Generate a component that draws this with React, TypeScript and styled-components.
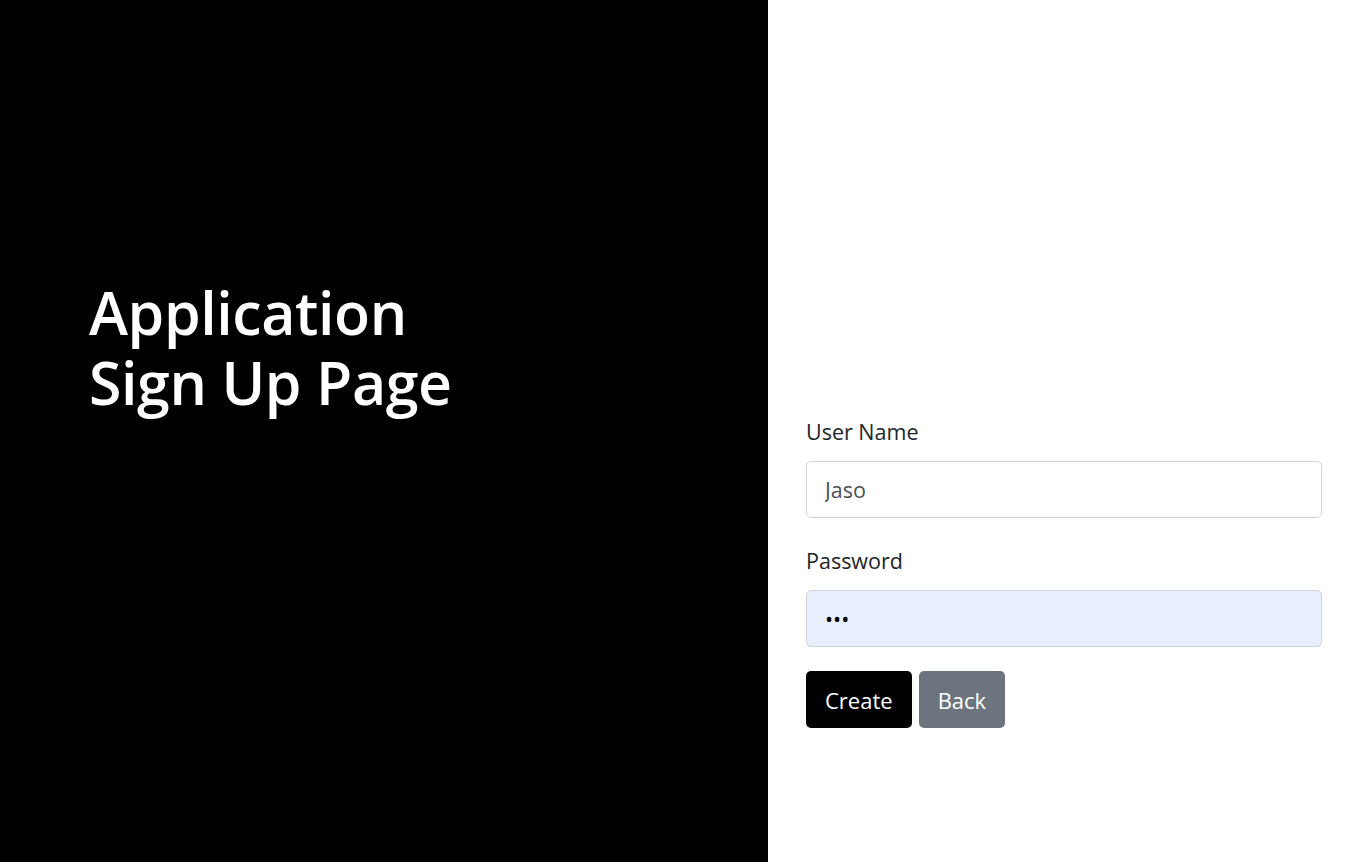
import React from "react";
import styled, { createGlobalStyle } from "styled-components";

const Global = createGlobalStyle`
  html, body { margin: 0; padding: 0; }
  body { font-family: "Open Sans", "Noto Sans", sans-serif; color: #212529; }
  * { box-sizing: border-box; }
`;

const Page = styled.div`
  display: grid;
  grid-template-columns: 768px 1fr;
  height: 862px;
`;

const Hero = styled.section`
  background: #000;
  color: #fff;
  padding: 277px 0 0 89px;
`;

const Title = styled.h1`
  margin: 0;
  font-size: 59px;
  font-weight: 600;
  line-height: 70px;
  letter-spacing: -0.4px;
`;

const FormPane = styled.section`
  background: #fff;
  padding: 416px 43px 0 38px;
`;

const Form = styled.form`
  display: flex;
  flex-direction: column;
`;

const Field = styled.div<{ $mb: number }>`
  display: flex;
  flex-direction: column;
  margin-bottom: ${(p) => p.$mb}px;
`;

const Label = styled.label`
  font-size: 21.5px;
  line-height: 32px;
  margin-bottom: 13px;
  color: #212529;
`;

const Input = styled.input<{ $autofill?: boolean }>`
  height: 57px;
  width: 100%;
  padding: 0 18px;
  font-family: inherit;
  font-size: 21.5px;
  color: ${(p) => (p.$autofill ? "#000" : "#495057")};
  background: ${(p) => (p.$autofill ? "#e8f0fe" : "#fff")};
  border: 1px solid #ced4da;
  border-radius: 5px;
  outline: none;
`;

const Actions = styled.div`
  display: flex;
  gap: 7px;
`;

const Button = styled.button<{ $variant: "dark" | "secondary" }>`
  height: 57px;
  padding: 0 19px;
  font-family: inherit;
  font-size: 22px;
  color: #fff;
  background: ${(p) => (p.$variant === "dark" ? "#000" : "#6c757d")};
  border: none;
  border-radius: 5px;
  cursor: pointer;
`;

export default function App() {
  return (
    <>
      <Global />
      <Page>
        <Hero>
          <Title>
            Application
            <br />
            Sign Up Page
          </Title>
        </Hero>
        <FormPane>
          <Form onSubmit={(e) => e.preventDefault()}>
            <Field $mb={27}>
              <Label>User Name</Label>
              <Input defaultValue="Jaso" />
            </Field>
            <Field $mb={24}>
              <Label>Password</Label>
              <Input type="password" defaultValue="abc" $autofill />
            </Field>
            <Actions>
              <Button $variant="dark">Create</Button>
              <Button $variant="secondary" type="button">Back</Button>
            </Actions>
          </Form>
        </FormPane>
      </Page>
    </>
  );
}
